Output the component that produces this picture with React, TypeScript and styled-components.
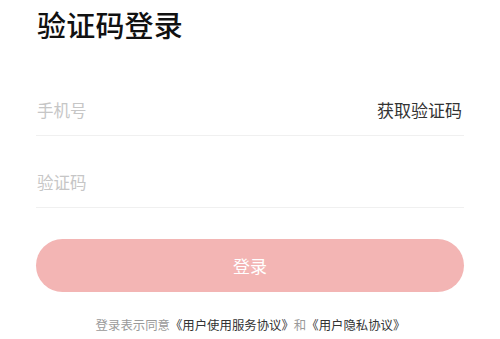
import React from "react";
import styled, { createGlobalStyle } from "styled-components";

const Global = createGlobalStyle`
  html, body { margin: 0; padding: 0; background: #fff; }
  body { font-family: "Noto Sans CJK SC", "Noto Sans", sans-serif; }
  input::placeholder { color: #c6c6c6; }
`;

const Page = styled.div`
  padding: 0 36px 0 37px;
  display: flex;
  flex-direction: column;
`;

const Title = styled.h1`
  margin: 4px 0 0;
  font-size: 29px;
  line-height: 40px;
  font-weight: 500;
  color: #111;
  letter-spacing: 0.2px;
`;

const Row = styled.div<{ $first?: boolean }>`
  display: flex;
  align-items: flex-end;
  justify-content: space-between;
  height: 72px;
  margin-top: ${(p) => (p.$first ? "20px" : "0")};
  padding-bottom: 13px;
  box-sizing: border-box;
  border-bottom: 1px solid #f0f0f0;
  margin-left: -1px;
  padding-left: 1px;
`;

const Field = styled.input`
  flex: 1;
  border: none;
  outline: none;
  padding: 0;
  font-family: inherit;
  font-size: 16.5px;
  line-height: 24px;
  height: 24px;
  color: #333;
  background: transparent;
`;

const CodeButton = styled.button`
  border: none;
  background: none;
  padding: 0;
  font-family: inherit;
  font-size: 17px;
  line-height: 24px;
  color: #333;
  cursor: pointer;
  margin-right: 2px;
`;

const Submit = styled.button`
  margin-top: 31px;
  height: 53px;
  border: none;
  border-radius: 27px;
  background: #f3b5b4;
  color: #fff;
  font-family: inherit;
  font-size: 17px;
  margin-left: -1px;
`;

const Agreement = styled.p`
  margin: 23px 0 0;
  text-align: center;
  font-size: 12.4px;
  line-height: 20px;
  color: #9a9a9a;
`;

const Link = styled.span`
  color: #333;
`;

export default function App() {
  return (
    <>
      <Global />
      <Page>
        <Title>验证码登录</Title>
        <Row $first>
          <Field placeholder="手机号" />
          <CodeButton>获取验证码</CodeButton>
        </Row>
        <Row>
          <Field placeholder="验证码" />
        </Row>
        <Submit>登录</Submit>
        <Agreement>
          登录表示同意<Link>《用户使用服务协议》</Link>和<Link>《用户隐私协议》</Link>
        </Agreement>
      </Page>
    </>
  );
}
